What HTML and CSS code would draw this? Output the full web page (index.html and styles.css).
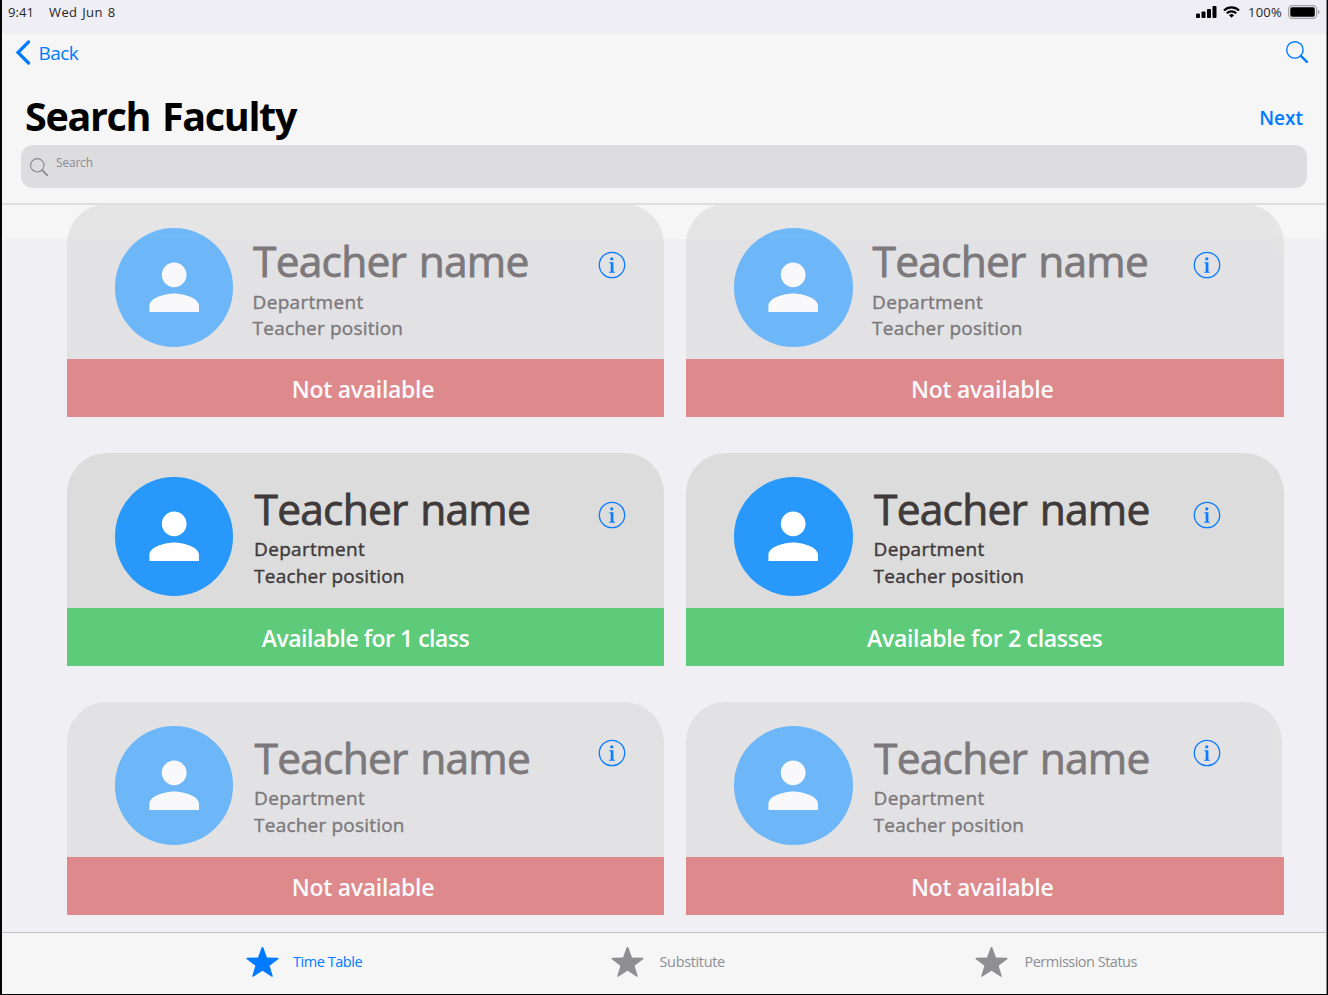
FILE: index.html
```html
<!DOCTYPE html>
<html lang="en">
<head>
<meta charset="utf-8">
<title>Search Faculty</title>
<link rel="stylesheet" href="styles.css">
</head>
<body>
<svg class="sprite" aria-hidden="true">
  <symbol id="person" viewBox="0 0 24 24"><path d="M12 12c2.200 0 4-1.800 4-4s-1.800-4-4-4-4 1.800-4 4 1.800 4 4 4zm0 2c-2.700 0-8 1.340-8 4v2h16v-2c0-2.660-5.300-4-8-4z"/></symbol>
  <symbol id="info" viewBox="0 0 28 28"><circle cx="14" cy="14" r="12.700" fill="none" stroke="currentColor" stroke-width="1.300"/><circle cx="13.800" cy="7.800" r="1.600"/><path d="M11.200 11.200h4.200v9.600h1.500v1h-5.700v-1h1.500v-8.600h-1.500z"/></symbol>
  <symbol id="star" viewBox="0 0 34 32"><path d="M17 .5c.5 0 .9.400 1.100 1l3.500 9.900 11 .300c1.100 0 1.300.900.500 1.500l-8.800 6.600 3.200 10.300c.3 1.100-.4 1.500-1.300.900L17 24.900 7.800 31c-.9.600-1.600.200-1.300-.900l3.200-10.300L.900 13.200c-.8-.6-.6-1.500.5-1.500l11-.3 3.500-9.900c.2-.6.600-1 1.100-1z"/></symbol>
  <symbol id="lens" viewBox="0 0 22 22"><circle class="ring" cx="8.900" cy="8.900" r="8.200" fill="none" stroke="currentColor"/><path d="M14.900 14.900l6 6" fill="none" stroke="currentColor" stroke-width="2.300" stroke-linecap="round"/></symbol>
</svg>
<div class="screen">
  <div class="status-bar">
    <span class="time">9:41</span><span class="date">Wed Jun 8</span>
    <svg class="signal" viewBox="0 0 21 12"><rect x="0" y="7.500" width="4" height="4.500" rx="1"/><rect x="5.500" y="5.500" width="4" height="6.500" rx="1"/><rect x="11" y="3" width="4" height="9" rx="1"/><rect x="16.500" y="0" width="4" height="12" rx="1"/></svg>
    <svg class="wifi" viewBox="0 0 17 12"><g fill="none" stroke="currentColor" stroke-width="2.200"><path d="M1 4.500a10.800 10.800 0 0 1 15 0"/><path d="M3.800 7.300a6.700 6.700 0 0 1 9.400 0"/></g><path d="M8.500 11.800L6 9.300a3.600 3.600 0 0 1 5 0z"/></svg>
    <span class="percent">100%</span>
    <svg class="battery" viewBox="0 0 32 14"><rect x=".6" y=".6" width="28" height="12.800" rx="3.600" fill="none" stroke="#a5a5a9" stroke-width="1.200"/><rect x="2.300" y="2.300" width="24.500" height="9.400" rx="1.800"/><path d="M30 4.800c2 .6 2 3.800 0 4.400z" fill="#a5a5a9"/></svg>
  </div>
  <header class="header">
    <div class="nav">
      <a class="back"><svg class="chevron" viewBox="0 0 16 25"><path d="M13.500 2L3 12.500 13.500 23"/></svg><span>Back</span></a>
      <svg class="nav-search"><use href="#lens"/></svg>
    </div>
    <div class="title-row"><h1 class="title">Search Faculty</h1><a class="next">Next</a></div>
    <div class="search"><svg class="search-icon"><use href="#lens"/></svg><span class="placeholder">Search</span></div>
  </header>
  <main class="list">
    <article class="card busy first">
      <div class="face"><div class="profile"><div class="avatar"><svg class="person"><use href="#person"/></svg></div><div class="text"><h2 class="name">Teacher name</h2><p class="line dept">Department</p><p class="line">Teacher position</p></div></div><div class="state">Not available</div></div>
      <svg class="info"><use href="#info"/></svg>
    </article>
    <article class="card busy first right">
      <div class="face"><div class="profile"><div class="avatar"><svg class="person"><use href="#person"/></svg></div><div class="text"><h2 class="name">Teacher name</h2><p class="line dept">Department</p><p class="line">Teacher position</p></div></div><div class="state">Not available</div></div>
      <svg class="info"><use href="#info"/></svg>
    </article>
    <article class="card free">
      <div class="face"><div class="profile"><div class="avatar"><svg class="person"><use href="#person"/></svg></div><div class="text"><h2 class="name">Teacher name</h2><p class="line dept">Department</p><p class="line">Teacher position</p></div></div><div class="state tight">Available for 1 class</div></div>
      <svg class="info"><use href="#info"/></svg>
    </article>
    <article class="card free right">
      <div class="face"><div class="profile"><div class="avatar"><svg class="person"><use href="#person"/></svg></div><div class="text"><h2 class="name">Teacher name</h2><p class="line dept">Department</p><p class="line">Teacher position</p></div></div><div class="state">Available for 2 classes</div></div>
      <svg class="info"><use href="#info"/></svg>
    </article>
    <article class="card busy last">
      <div class="face"><div class="profile"><div class="avatar"><svg class="person"><use href="#person"/></svg></div><div class="text"><h2 class="name">Teacher name</h2><p class="line dept">Department</p><p class="line">Teacher position</p></div></div><div class="state">Not available</div></div>
      <svg class="info"><use href="#info"/></svg>
    </article>
    <article class="card busy last right">
      <div class="face"><div class="profile narrow"><div class="avatar"><svg class="person"><use href="#person"/></svg></div><div class="text"><h2 class="name">Teacher name</h2><p class="line dept">Department</p><p class="line">Teacher position</p></div></div><div class="state">Not available</div></div>
      <svg class="info"><use href="#info"/></svg>
    </article>
  </main>
  <nav class="tabs">
    <a class="tab active"><svg class="star"><use href="#star"/></svg><span class="tab-label">Time Table</span></a>
    <a class="tab"><svg class="star"><use href="#star"/></svg><span class="tab-label sub">Substitute</span></a>
    <a class="tab"><svg class="star"><use href="#star"/></svg><span class="tab-label perm">Permission Status</span></a>
  </nav>
</div>
</body>
</html>
```

FILE: styles.css
```css
* { box-sizing: border-box; }
body { margin: 0; font-family: "Open Sans", "Noto Sans", sans-serif; }
h1, h2, p { margin: 0; }
svg { display: block; flex: none; fill: currentColor; }
.sprite { position: absolute; width: 0; height: 0; }
.screen {
  display: flex; flex-direction: column;
  width: 1328px; height: 995px; overflow: hidden;
  border: solid #050505; border-width: 0 1px 1px 2px;
  box-shadow: inset -1px 0 #88888b;
  background: #efeff4;
}
.status-bar {
  display: flex; align-items: center; height: 34px; padding: 0 7px 10px 6px;
  font-size: 13px; color: #262626; white-space: nowrap;
  background: #efeef4; margin-right: 1px;
}
.time { width: 41px; letter-spacing: .1px; }
.date { margin-right: auto; letter-spacing: .4px; word-spacing: 1px; }
.signal { width: 21px; height: 12px; margin-right: 6px; color: #000; }
.wifi { width: 17px; height: 12px; margin-right: 8px; color: #000; }
.percent { width: 40px; letter-spacing: .2px; }
.battery { width: 32px; height: 14px; margin-right: -1px; color: #000; }
.header {
  flex: none; height: 171px; margin-right: 1px; padding: 0 19px 0 19px;
  background: #f6f6f6; border-bottom: 2px solid #dedede; position: relative; z-index: 1;
}
.nav { display: flex; justify-content: space-between; height: 56px; color: #007aff; }
.back { display: flex; margin-left: -6px; padding-top: 6px; font-size: 19px; line-height: 26px; letter-spacing: -.6px; }
.chevron { width: 16px; height: 25px; margin: -.5px 7.500px 0 0; }
.chevron path { fill: none; stroke: currentColor; stroke-width: 3.200; stroke-linecap: round; }
.ring { stroke-width: 1.400; }
.nav-search { width: 22px; height: 22px; margin: 7px -.5px 0 0; }
.title-row { display: flex; justify-content: space-between; height: 55px; padding: 0 4px; }
.title { font-size: 39.500px; line-height: 53px; font-weight: 700; letter-spacing: -1.350px; word-spacing: 3px; color: #000; }
.next { font-size: 19px; line-height: 57px; font-weight: 600; color: #007aff; }
.search {
  display: flex; height: 43px; padding: 13px 8.500px; border-radius: 12px;
  background: #dddddf; color: #8b8b90;
}
.search-icon { width: 18px; height: 18px; }
.placeholder { margin-left: 8.500px; font-size: 12px; line-height: 17px; margin-top: -4px; letter-spacing: -.2px; }
.list {
  flex: 1; display: grid; grid-template-columns: 597px 597.500px; column-gap: 22px; row-gap: 36px;
  grid-auto-rows: 213px; align-content: start; margin: -1px 1px 0 0; padding-left: 65px;
  background: linear-gradient(#f6f6f6 35px, #efeff4 35px);
}
.card { position: relative; }
.busy .face { opacity: .65; }
.profile { display: flex; height: 154.500px; padding: 24px 0 0 47.500px; border-radius: 40px 40px 0 0; background: #dcdcdc; }
.right .profile { padding-left: 48px; }
.narrow { margin-right: 2px; }
.avatar {
  display: flex; align-items: center; justify-content: center; flex: none;
  width: 118.600px; height: 118.600px; border-radius: 50%; background: #2899fb; color: #fff;
}
.person { width: 74.400px; height: 74.400px; }
.text { padding: 7px 0 0 21px; color: #403a3b; white-space: nowrap; }
.name { font-size: 42.500px; line-height: 49px; padding-bottom: 1px; margin-left: .5px; font-weight: 400; letter-spacing: -.8px; word-spacing: 2.500px; -webkit-text-stroke: .8px currentColor; }
.line { font-size: 19px; line-height: 27px; font-weight: 400; letter-spacing: .2px; -webkit-text-stroke: .4px currentColor; }
.dept { margin-top: 2px; letter-spacing: .3px; }
.first .text { padding: 8px 0 0 19.500px; }
.first .dept { margin-top: 3px; }
.first .dept + .line { margin-top: -1px; }
.state {
  height: 58.500px; padding: 1px 5px 0 0; text-align: center;
  font-size: 23px; line-height: 59px; font-weight: 600; letter-spacing: -.3px; color: #fff;
}
.busy .state { background: #d55355; }
.free .state { background: #5ecb7a; padding-right: 0; }
.free .tight { letter-spacing: -.5px; }
.info { position: absolute; top: 47.500px; left: 530.500px; width: 28px; height: 28px; color: #0a7cff; }
.first .info { top: 46.500px; }
.last .info { top: 37px; }
.right .info { left: 507px; }
.tabs {
  flex: none; display: grid; grid-template-columns: 364.500px 364.500px 1fr; height: 62px; margin-right: 1px;
  padding: 13px 0 0 244px; border-top: 1px solid #c2c2c6; background: #f6f6f6;
}
.tab { display: flex; color: #8e8e93; }
.active { color: #007aff; }
.star { width: 33px; height: 32px; }
.tab-label { margin-left: 14px; font-size: 14.500px; line-height: 31px; letter-spacing: -.45px; white-space: nowrap; }
.sub { margin-left: 16px; letter-spacing: -.35px; }
.perm { margin-left: 16.500px; letter-spacing: -.5px; }
```
